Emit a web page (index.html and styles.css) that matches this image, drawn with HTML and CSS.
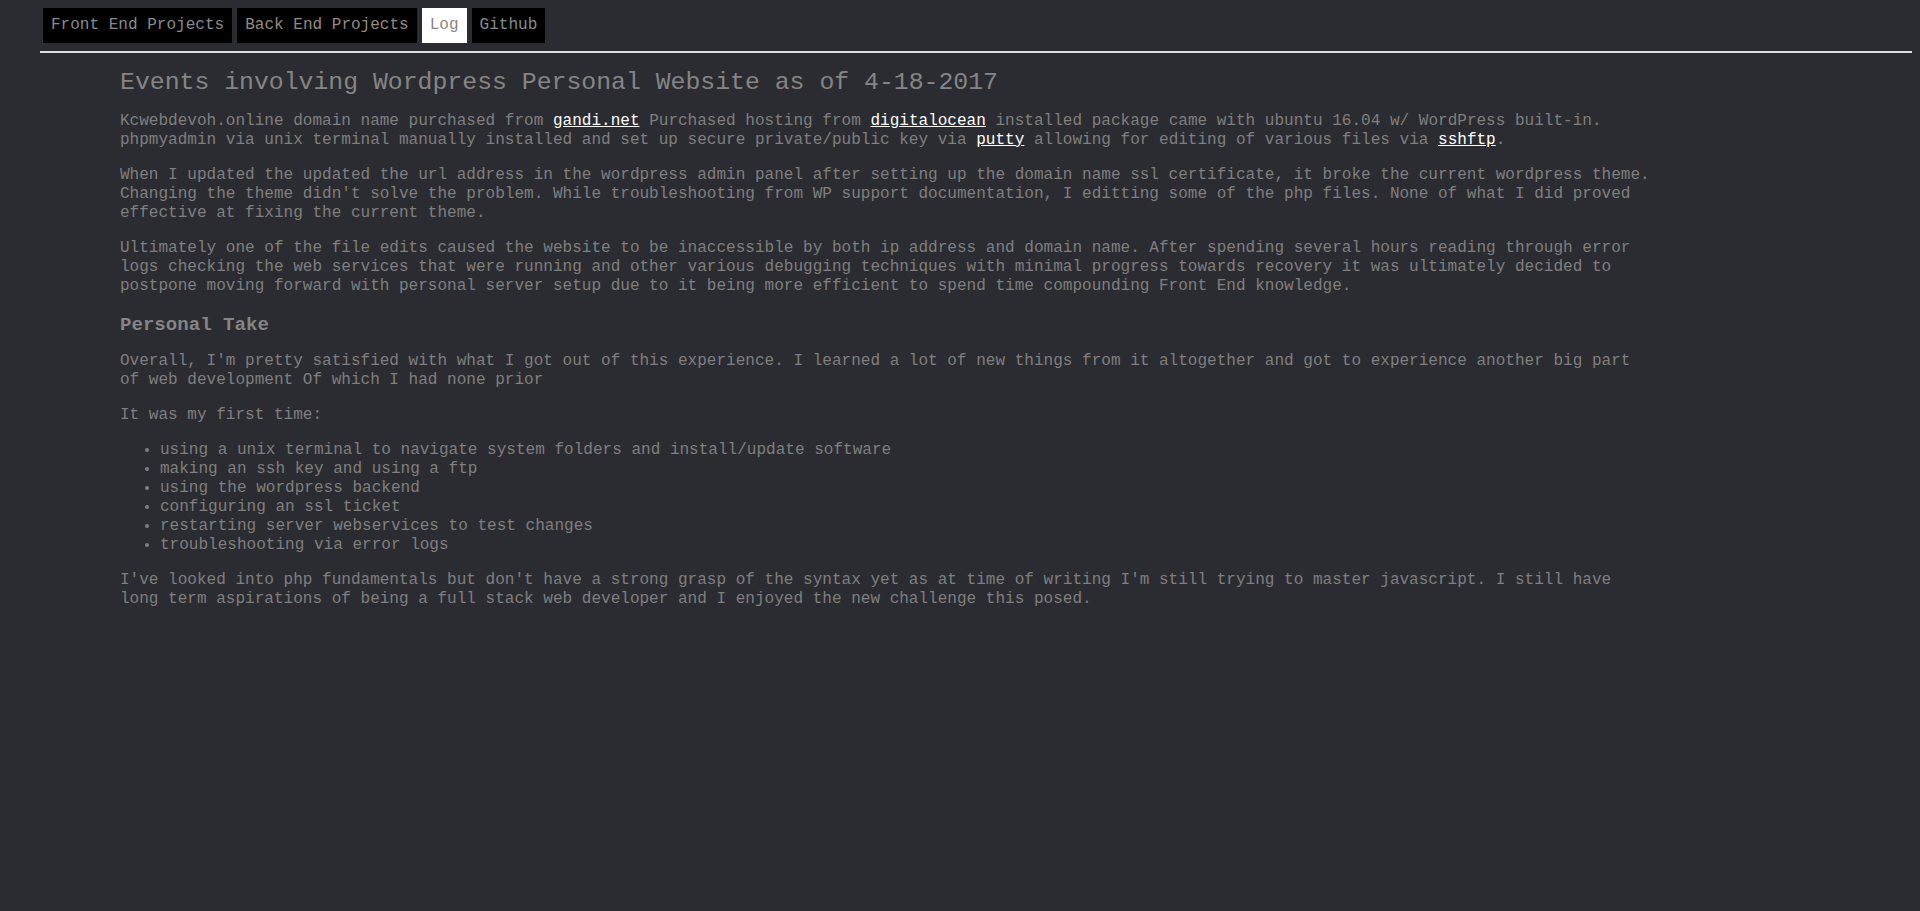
FILE: index.html
```html
<!DOCTYPE html>
<html lang="en">
<head>
<meta charset="utf-8">
<title>Log</title>
<link rel="stylesheet" href="styles.css">
</head>
<body>
<header class="site-header">
  <nav class="nav">
    <a class="nav-item" href="#">Front End Projects</a>
    <a class="nav-item nav-item-visited" href="#">Back End Projects</a>
    <a class="nav-item nav-item-active" href="#">Log</a>
    <a class="nav-item" href="#">Github</a>
  </nav>
  <hr class="divider">
</header>
<main class="log">
  <h1 class="log-title">Events involving Wordpress Personal Website as of 4-18-2017</h1>
  <p class="log-text">Kcwebdevoh.online domain name purchased from <a class="log-link" href="#">gandi.net</a> Purchased hosting from <a class="log-link" href="#">digitalocean</a> installed package came with ubuntu 16.04 w/ WordPress built-in. phpmyadmin via unix terminal manually installed and set up secure private/public key via <a class="log-link" href="#">putty</a> allowing for editing of various files via <a class="log-link" href="#">sshftp</a>.</p>
  <p class="log-text">When I updated the updated the url address in the wordpress admin panel after setting up the domain name ssl certificate, it broke the current wordpress theme. Changing the theme didn't solve the problem. While troubleshooting from WP support documentation, I editting some of the php files. None of what I did proved effective at fixing the current theme.</p>
  <p class="log-text">Ultimately one of the file edits caused the website to be inaccessible by both ip address and domain name. After spending several hours reading through error logs checking the web services that were running and other various debugging techniques with minimal progress towards recovery it was ultimately decided to postpone moving forward with personal server setup due to it being more efficient to spend time compounding Front End knowledge.</p>
  <h2 class="log-subtitle">Personal Take</h2>
  <p class="log-text">Overall, I'm pretty satisfied with what I got out of this experience. I learned a lot of new things from it altogether and got to experience another big part of web development Of which I had none prior</p>
  <p class="log-text">It was my first time:</p>
  <ul class="log-list">
    <li>using a unix terminal to navigate system folders and install/update software</li>
    <li>making an ssh key and using a ftp</li>
    <li>using the wordpress backend</li>
    <li>configuring an ssl ticket</li>
    <li>restarting server webservices to test changes</li>
    <li>troubleshooting via error logs</li>
  </ul>
  <p class="log-text">I've looked into php fundamentals but don't have a strong grasp of the syntax yet as at time of writing I'm still trying to master javascript. I still have long term aspirations of being a full stack web developer and I enjoyed the new challenge this posed.</p>
</main>
</body>
</html>
```
FILE: styles.css
```css
html {
  background: #2b2c31;
}

body {
  margin: 8px;
  background: #2b2c31;
  color: #7f7f7f;
  font-family: "Liberation Mono", "DejaVu Sans Mono", monospace;
  font-size: 16.05px;
  line-height: 19px;
}

.site-header {
  display: flex;
  flex-direction: column;
}

.nav {
  display: flex;
  gap: 5px;
  padding-left: 35px;
}

.nav-item {
  display: block;
  padding: 8px;
  background: #000;
  color: #868a8e;
  text-decoration: none;
  line-height: 19px;
}

.nav-item-visited {
  color: #948a7e;
}

.nav-item-active {
  background: #fff;
  color: #8a8582;
}

.divider {
  margin: 8px 0 0 32px;
  height: 0;
  border: 0;
  border-top: 2px solid #dcdcdc;
}

.log {
  padding-left: 112px;
  width: 1535px;
}

.log-title {
  margin: 15px 0;
  font-size: 24.8px;
  line-height: 29px;
  font-weight: normal;
  color: #858585;
}

.log-text {
  margin: 16px 0;
}

.log-title + .log-text {
  margin-top: 15px;
}

.log-link {
  color: #fff;
  text-decoration: underline;
}

.log-subtitle {
  margin: 18px 0 15px;
  font-size: 19.1px;
  line-height: 22px;
  font-weight: bold;
  color: #858585;
}

.log-list {
  margin: 16px 0;
  padding-left: 40px;
}
```
